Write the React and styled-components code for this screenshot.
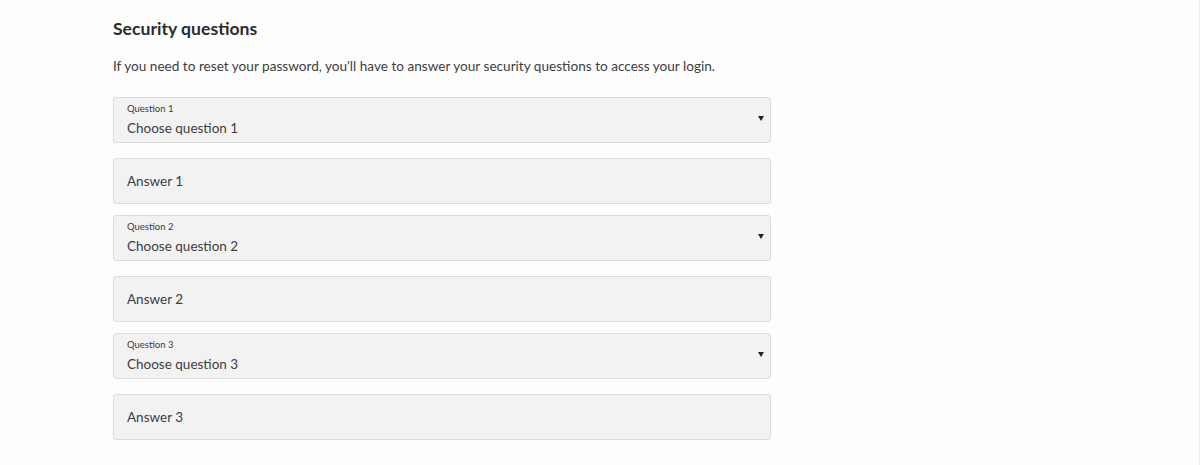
import React from "react";
import styled, { createGlobalStyle } from "styled-components";

const GlobalStyle = createGlobalStyle`
  html, body {
    margin: 0;
    padding: 0;
    background: #fdfdfd;
  }
  body {
    font-family: Lato, "Liberation Sans", sans-serif;
    color: #333;
  }
`;

const Page = styled.div`
  min-height: 465px;
  box-sizing: border-box;
  padding: 17px 0 0 113px;
  border-right: 1px solid #ececec;
  width: 1200px;
`;

const Section = styled.section`
  width: 658px;
  display: flex;
  flex-direction: column;
`;

const Title = styled.h2`
  margin: 0;
  font-size: 17.6px;
  font-weight: 700;
  color: #2b2b2b;
  line-height: 24px;
`;

const Intro = styled.p`
  margin: 16px 0 22px;
  font-size: 13.6px;
  line-height: 18px;
  color: #3d3d3d;
`;

const Fields = styled.div`
  display: flex;
  flex-direction: column;
`;

const Pair = styled.div`
  display: flex;
  flex-direction: column;
  gap: 15px;
  margin-bottom: 11px;
`;

const Box = styled.div`
  position: relative;
  box-sizing: border-box;
  height: 46px;
  background: #f2f2f2;
  border: 1px solid #dcdcdc;
  border-radius: 3px;
  padding: 0 13px;
  display: flex;
  flex-direction: column;
  justify-content: center;
`;

const SmallLabel = styled.span`
  font-size: 9.5px;
  line-height: 11px;
  color: #3a3a3a;
`;

const Value = styled.span`
  font-size: 13.5px;
  line-height: 18px;
  color: #3d3d3d;
  margin-top: ${(p) => (p.$select ? "5px" : "0")};
`;

const Arrow = styled.span`
  position: absolute;
  right: 6px;
  top: 18px;
  width: 0;
  height: 0;
  border-left: 3px solid transparent;
  border-right: 3px solid transparent;
  border-top: 5px solid #222;
`;

const items = [1, 2, 3];

export default function App() {
  return (
    <>
      <GlobalStyle />
      <Page>
        <Section>
          <Title>Security questions</Title>
          <Intro>
            If you need to reset your password, you'll have to answer your security
            questions to access your login.
          </Intro>
          <Fields>
            {items.map((n) => (
              <Pair key={n}>
                <Box>
                  <SmallLabel>Question {n}</SmallLabel>
                  <Value $select>Choose question {n}</Value>
                  <Arrow />
                </Box>
                <Box>
                  <Value>Answer {n}</Value>
                </Box>
              </Pair>
            ))}
          </Fields>
        </Section>
      </Page>
    </>
  );
}
